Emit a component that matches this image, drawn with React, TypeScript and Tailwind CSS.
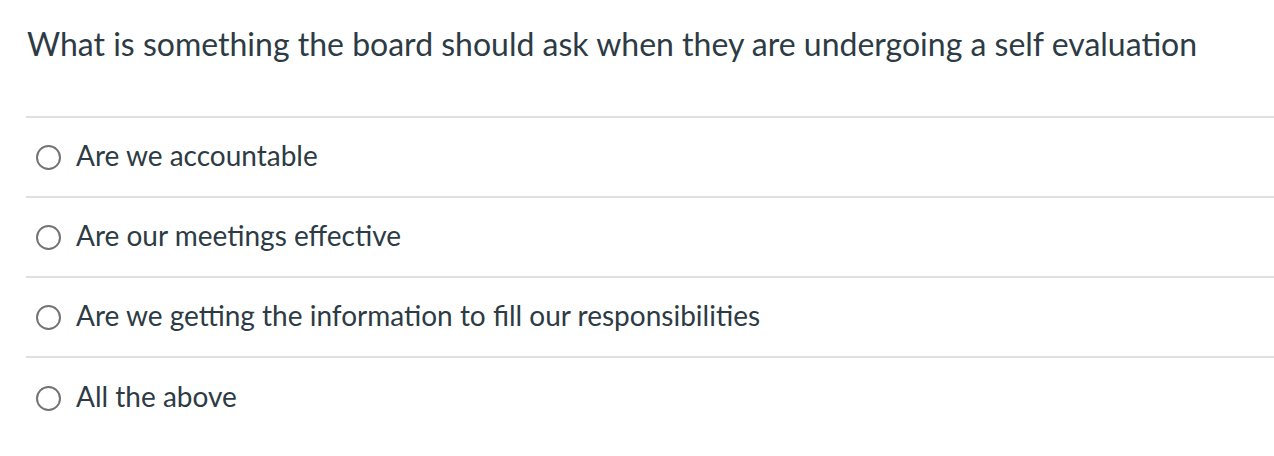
const ANSWERS = [
  'Are we accountable',
  'Are our meetings effective',
  'Are we getting the information to fill our responsibilities',
  'All the above',
];

export default function App() {
  return (
    <div className="h-[456px] w-[1274px] bg-white pl-[26px] font-['Lato',sans-serif] text-[#2d3b45]">
      <div className="flex h-[116px] items-start pt-[24px] pl-[1px]">
        <h1 className="text-[32px] leading-[40px]">
          What is something the board should ask when they are undergoing a self evaluation
        </h1>
      </div>
      <div className="border-t-2 border-[#e0e0e0]">
        {ANSWERS.map((a, i) => (
          <label
            key={a}
            className={
              'flex h-[80px] items-center gap-[15px] pl-[10px] ' +
              (i < ANSWERS.length - 1 ? 'border-b-2 border-[#e0e0e0]' : '')
            }
          >
            <span className="h-[25px] w-[25px] shrink-0 rounded-full border-2 border-[#737373] bg-white" />
            <span className="-mt-[4px] text-[28px] leading-[36px]">{a}</span>
          </label>
        ))}
      </div>
    </div>
  );
}
